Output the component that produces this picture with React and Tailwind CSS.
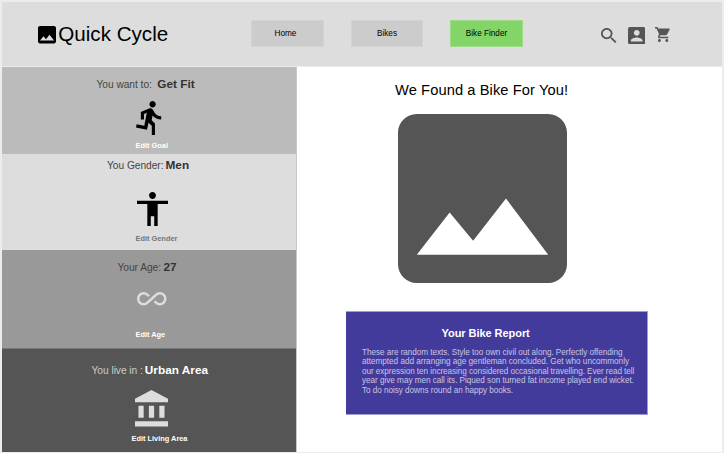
import React from "react";

const paths = {
  image:
    "M21 19V5c0-1.1-.9-2-2-2H5c-1.1 0-2 .9-2 2v14c0 1.1.9 2 2 2h14c1.1 0 2-.9 2-2zM8.5 13.5l2.5 3.01L14.5 12l4.5 6H5l3.5-4.5z",
  search:
    "M15.5 14h-.79l-.28-.27C15.41 12.59 16 11.11 16 9.5 16 5.91 13.09 3 9.5 3S3 5.91 3 9.5 5.91 16 9.5 16c1.61 0 3.09-.59 4.23-1.57l.27.28v.79l5 4.99L20.49 19l-4.99-5zm-6 0C7.01 14 5 11.99 5 9.5S7.01 5 9.5 5 14 7.01 14 9.5 11.99 14 9.5 14z",
  account:
    "M3 5v14c0 1.1.89 2 2 2h14c1.1 0 2-.9 2-2V5c0-1.1-.9-2-2-2H5c-1.11 0-2 .9-2 2zm12 4c0 1.66-1.34 3-3 3s-3-1.34-3-3 1.34-3 3-3 3 1.34 3 3zm-9 8c0-2 4-3.1 6-3.1s6 1.1 6 3.1v1H6v-1z",
  cart:
    "M7 18c-1.1 0-1.99.9-1.99 2S5.9 22 7 22s2-.9 2-2-.9-2-2-2zM1 2v2h2l3.6 7.59-1.35 2.45c-.16.28-.25.61-.25.96 0 1.1.9 2 2 2h12v-2H7.42c-.14 0-.25-.11-.25-.25l.03-.12.9-1.63h7.45c.75 0 1.41-.41 1.75-1.03l3.58-6.49c.08-.14.12-.31.12-.48 0-.55-.45-1-1-1H5.21l-.94-2H1zm16 16c-1.1 0-1.99.9-1.99 2s.89 2 1.99 2 2-.9 2-2-.9-2-2-2z",
  run: "M13.49 5.48c1.1 0 2-.9 2-2s-.9-2-2-2-2 .9-2 2 .9 2 2 2zm-3.6 13.9l1-4.4 2.1 2v6h2v-7.5l-2.1-2 .6-3c1.3 1.5 3.3 2.5 5.5 2.5v-2c-1.9 0-3.5-1-4.3-2.4l-1-1.6c-.4-.6-1-1-1.7-1-.3 0-.5.1-.8.1l-5.2 2.2v4.7h2v-3.4l1.8-.7-1.6 8.1-4.9-1-.4 2 7 1.4z",
  person:
    "M12 2c1.1 0 2 .9 2 2s-.9 2-2 2-2-.9-2-2 .9-2 2-2zm9 7h-6v13h-2v-6h-2v6H9V9H3V7h18v2z",
  infinity:
    "M18.6 6.62c-1.44 0-2.8.56-3.77 1.53L12 10.66 10.48 12h.01L7.8 14.39c-.64.64-1.49.99-2.4.99-1.87 0-3.39-1.51-3.39-3.38S3.53 8.62 5.4 8.62c.91 0 1.76.35 2.44 1.03l1.13 1 1.51-1.34L9.22 8.2C8.2 7.18 6.84 6.62 5.4 6.62 2.42 6.62 0 9.04 0 12s2.42 5.38 5.4 5.38c1.44 0 2.8-.56 3.77-1.53l2.83-2.5.01.01L13.52 12h-.01l2.69-2.39c.64-.64 1.49-.99 2.4-.99 1.87 0 3.39 1.51 3.39 3.38s-1.52 3.38-3.39 3.38c-.9 0-1.76-.35-2.44-1.03l-1.14-1.01-1.51 1.34 1.27 1.12c1.02 1.01 2.37 1.57 3.82 1.57 2.98 0 5.4-2.41 5.4-5.38s-2.42-5.37-5.4-5.37z",
  bank: "M4 10v7h3v-7H4zm6 0v7h3v-7h-3zM2 22h19v-3H2v3zm14-12v7h3v-7h-3zm-4.5-9L2 6v2h19V6l-9.5-5z",
};

function Icon({ name, box, className }) {
  return (
    <svg viewBox={box} preserveAspectRatio="none" fill="currentColor" className={`block shrink-0 ${className}`}>
      <path d={paths[name]} />
    </svg>
  );
}

function Panel({ className, label, value, labelClass, valueClass, lineClass, icon, action, actionClass }) {
  return (
    <section className={`flex shrink-0 flex-col items-start ${className}`}>
      <p className={`flex h-4 items-baseline leading-4 ${lineClass}`}>
        <span className={`text-[10.2px] tracking-[-0.03px] ${labelClass}`}>{label}</span>
        <strong className={`text-[11.8px] font-bold ${valueClass}`}>{value}</strong>
      </p>
      {icon}
      <a className={`block h-2 text-[7.4px] font-bold leading-2 ${actionClass}`}>{action}</a>
    </section>
  );
}

export default function App() {
  return (
    <div className="flex h-[453px] w-[724px] flex-col overflow-hidden whitespace-nowrap border-t-2 border-r-2 border-b border-l-2 border-[#ececec] bg-white font-['Liberation_Sans',Arial,sans-serif] text-black">
      <header className="flex h-[65px] shrink-0 items-start border-b border-[#ececec] bg-[#dddddd]">
        <div className="flex w-[249px] items-start pl-9">
          <Icon name="image" box="3 3 18 18" className="mt-6 h-[17.5px] w-[18px]" />
          <h1 className="ml-[2.3px] mt-[20px] text-[20.6px] leading-6">Quick Cycle</h1>
        </div>
        <nav className="mt-[18px] flex gap-[27px] text-[8.2px]">
          <a className="flex h-[27px] w-[73px] items-center justify-center border border-[#d3d3d3] bg-[#cccccc] pr-1 pt-[2px]">Home</a>
          <a className="flex h-[27px] w-[72px] items-center justify-center border border-[#d3d3d3] bg-[#cccccc] pt-[2px]">Bikes</a>
          <a className="flex h-[27px] w-[73px] items-center justify-center border border-[#9fdc89] bg-[#84d568] pt-[2px]">Bike Finder</a>
        </nav>
        <div className="flex items-start pl-[78px] text-[#555555]">
          <Icon name="search" box="3 3 17.5 17.5" className="mt-[26px] h-[15px] w-[15.5px]" />
          <Icon name="account" box="3 3 18 18" className="ml-[11px] mt-[24.5px] h-[17.5px] w-[17.5px]" />
          <Icon name="cart" box="1 2 21 20" className="ml-[9.5px] mt-[25px] h-[15px] w-[15.5px]" />
        </div>
      </header>

      <div className="flex h-[385px]">
        <aside className="flex w-[295px] shrink-0 flex-col border-r border-[#c8c8c8]">
          <Panel
            className="h-[87px] bg-[#bbbbbb] pt-[8.5px]"
            lineClass="pl-[94.5px]"
            label="You want to:"
            labelClass="text-[#444444]"
            value="Get Fit"
            valueClass="ml-[5.5px] text-[#333333]"
            icon={<Icon name="run" box="2.89 1.48 16.6 21.5" className="ml-[134px] mt-[9px] h-[34.5px] w-[26px]" />}
            action="Edit Goal"
            actionClass="ml-[133.5px] mt-[7px] text-white"
          />
          <Panel
            className="h-[96px] bg-[#dddddd] pt-[3px]"
            lineClass="pl-[105px]"
            label="You Gender:"
            labelClass="text-[#444444]"
            value="Men"
            valueClass="ml-[2px] text-[#333333]"
            icon={<Icon name="person" box="3 2 18 20" className="ml-[134.5px] mt-[18.5px] h-[34.5px] w-[31px]" />}
            action="Edit Gender"
            actionClass="ml-[133.5px] mt-[8.5px] text-[#777777]"
          />
          <Panel
            className="h-[98px] bg-[#999999] pt-[9px]"
            lineClass="pl-[115.5px]"
            label="Your Age:"
            labelClass="text-[#444444]"
            value="27"
            valueClass="ml-[2.5px] text-[#333333]"
            icon={<Icon name="infinity" box="0 6.62 24 10.76" className="ml-[135px] mt-[17px] h-[13.5px] w-[29.5px] text-[#dddddd]" />}
            action="Edit Age"
            actionClass="ml-[133.5px] mt-[25.5px] text-white"
          />
          <Panel
            className="h-[104px] border-t border-[#777777] bg-[#555555] pt-[13px]"
            lineClass="pl-[89.5px]"
            label="You live in :"
            labelClass="text-[#cccccc]"
            value="Urban Area"
            valueClass="ml-[2px] text-white"
            icon={<Icon name="bank" box="2 1 19 21" className="ml-[133px] mt-[12px] h-[36.5px] w-[33px] text-[#dddddd]" />}
            action="Edit Living Area"
            actionClass="ml-[129.5px] mt-[8.5px] text-white"
          />
        </aside>

        <main className="flex flex-1 flex-col items-start">
          <h2 className="ml-[98px] mt-[13px] text-[14.7px] leading-5 tracking-[0.08px]">We Found a Bike For You!</h2>
          <Icon name="image" box="3 3 18 18" className="ml-[100.5px] mt-[14.3px] h-[169px] w-[169px] text-[#555555]" />
          <article className="ml-[49px] mt-[27.7px] h-[104px] w-[302px] border-y border-r border-[#a19cce] bg-[#433b9c]">
            <h3 className="ml-[95.5px] mt-[15px] text-[11px] font-bold leading-3 tracking-[-0.05px] text-white">Your Bike Report</h3>
            <div className="ml-[16px] mt-[9px] text-[8.2px] leading-[9.5px] text-[#c8c5e2]">
              <p className="tracking-[-0.05px]">These are random texts. Style too own civil out along. Perfectly offending</p>
              <p className="tracking-[-0.03px]">attempted add arranging age gentleman concluded. Get who uncommonly</p>
              <p className="tracking-[-0.075px]">our expression ten increasing considered occasional travelling. Ever read tell</p>
              <p className="tracking-[-0.04px]">year give may men call its. Piqued son turned fat income played end wicket.</p>
              <p className="tracking-[-0.05px]">To do noisy downs round an happy books.</p>
            </div>
          </article>
        </main>
      </div>
    </div>
  );
}
